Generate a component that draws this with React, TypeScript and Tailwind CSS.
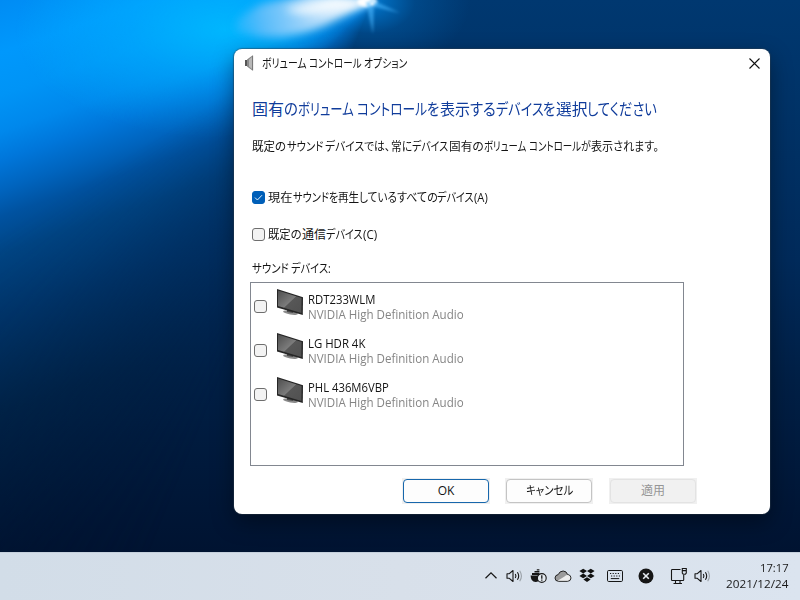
import { ReactNode, useLayoutEffect, useRef, useState } from 'react'
import clsx from 'clsx'

const devices = [
  { name: 'RDT233WLM', width: 67, driver: 'NVIDIA High Definition Audio' },
  { name: 'LG HDR 4K', width: 57, driver: 'NVIDIA High Definition Audio' },
  { name: 'PHL 436M6VBP', width: 81, driver: 'NVIDIA High Definition Audio' },
]

// Condenses a run of text to the given advance width, like the narrow kana of a UI font
function Fit({ width, children }: { width: number; children: ReactNode }) {
  const ref = useRef<HTMLSpanElement>(null)
  const [scale, setScale] = useState(1)

  useLayoutEffect(() => {
    if (ref.current) setScale(width / ref.current.offsetWidth)
  }, [width])

  return (
    <span className="inline-block align-top" style={{ width }}>
      <span className="inline-block origin-left whitespace-nowrap" ref={ref} style={{ transform: `scaleX(${scale})` }}>
        {children}
      </span>
    </span>
  )
}

function Line({ runs, className }: { runs: [string, number][]; className?: string }) {
  return (
    <span className={clsx('flex', className)}>
      {runs.map(([text, width], i) =>
        text ? <Fit key={i} width={width}>{text}</Fit> : <span key={i} className="whitespace-pre" style={{ width }}> </span>
      )}
    </span>
  )
}

function Wallpaper() {
  return (
    <div className="absolute inset-x-0 top-0 h-[552px] overflow-hidden">
      <div className="absolute inset-0 bg-[linear-gradient(180deg,#003870_0px,#003266_120px,#002a5a_260px,#001f45_380px,#001331_552px)]" />
      <div className="absolute inset-0 bg-[linear-gradient(161deg,#008cf4_0px,#0098fc_50px,#0094f6_90px,#0088ec_125px,#0076da_152px,#0064be_180px,#0052a0_205px,#004584_240px,#00366c_300px,#002549_390px,#001431_530px)] [mask-image:conic-gradient(from_0deg_at_372px_2px,transparent_202deg,#000c_228deg,#000_238deg,#000_290deg,transparent_300deg)]" />
      <div className="absolute inset-0 bg-[radial-gradient(ellipse_210px_110px_at_225px_30px,#00bcffdd,#00b0ff88_45%,transparent)] [mask-image:conic-gradient(from_0deg_at_372px_2px,transparent_222deg,#000_248deg,#000_300deg,transparent_310deg)]" />
      <div className="absolute inset-0 bg-[radial-gradient(ellipse_100px_70px_at_370px_2px,#0088e8cc,#0068b855_45%,transparent)]" />
      <svg className="absolute inset-0" width="800" height="552">
        <defs>
          <filter id="soft" x="-50%" y="-50%" width="200%" height="200%">
            <feGaussianBlur stdDeviation="4.5" />
          </filter>
          <filter id="core" x="-50%" y="-80%" width="200%" height="260%">
            <feGaussianBlur stdDeviation="4" />
          </filter>
          <filter id="glint" x="-80%" y="-80%" width="260%" height="260%">
            <feGaussianBlur stdDeviation="1.7" />
          </filter>
          <linearGradient id="beam" gradientUnits="userSpaceOnUse" x1="372" y1="2" x2="235" y2="30">
            <stop offset="0" stopColor="#fff" />
            <stop offset="0.45" stopColor="#b4dcfb" stopOpacity="0.95" />
            <stop offset="0.8" stopColor="#66befa" stopOpacity="0.85" />
            <stop offset="1" stopColor="#35b8ff" stopOpacity="0.5" />
          </linearGradient>
        </defs>
        <path d="M376 0 L310 -6 L262 4 Q226 22 238 32 Q278 45 324 26 Z" fill="url(#beam)" filter="url(#soft)" />
        <path d="M374 1 L335 -4 L285 9 Q298 17 328 13 Z" fill="#fff" opacity="0.75" filter="url(#core)" />
        <ellipse cx="367" cy="2" rx="10" ry="5" fill="#fff" filter="url(#glint)" />
        <path d="M366 2 L373 34 L374 2 Z M370 -1 L400 13 L371 6 Z" fill="#4cb8ff" opacity="0.6" filter="url(#glint)" />
      </svg>
    </div>
  )
}

function Checkbox({ checked }: { checked?: boolean }) {
  return (
    <span
      className={clsx(
        'grid size-[13px] shrink-0 place-items-center rounded-[3px] border',
        checked ? 'border-[#005fb8] bg-[#005fb8]' : 'border-[#6e6e6e] bg-[#f3f3f3]'
      )}
    >
      {checked && (
        <svg width="9" height="9" viewBox="0 0 9 9" fill="none" stroke="#fff" strokeWidth="0.9">
          <path d="M1 4.6 L3.4 7 L8 2.2" />
        </svg>
      )}
    </span>
  )
}

function MonitorIcon() {
  return (
    <svg className="shrink-0" width="28" height="28" viewBox="0 0 28 28">
      <defs>
        <linearGradient id="screen" x1="0" y1="0" x2="1" y2="1">
          <stop offset="0" stopColor="#4e4e4e" />
          <stop offset="0.5" stopColor="#7c7c7c" />
          <stop offset="0.52" stopColor="#575757" />
          <stop offset="1" stopColor="#505050" />
        </linearGradient>
      </defs>
      <ellipse cx="14.5" cy="24.7" rx="7.5" ry="1.9" transform="rotate(10 14.5 24.7)" fill="#8a8a8a" />
      <path d="M11 20 L18 22 L17 25 L11 24 Z" fill="#4a4a4a" />
      <path d="M1 1 L27 9.2 L26.8 27 L1 19.4 Z" fill="#252525" />
      <path d="M2 2.6 L25.6 10 L25.4 25 L2 18 Z" fill="url(#screen)" />
    </svg>
  )
}

function Button({ children, kind }: { children: ReactNode; kind?: 'default' | 'disabled' }) {
  return (
    <div className="bg-[#f0f0f0] p-px">
      <div
        className={clsx(
          'flex h-6 w-[86px] items-center justify-center rounded-[4px] border pb-px text-[12px]',
          kind === 'default' && 'border-[#1767ac] bg-[#fdfdfd]',
          kind === 'disabled' && 'border-[#e3e3e3] bg-[#f1f1f1] text-[#969696]',
          !kind && 'border-[#c4c4c4] bg-[#fdfdfd]'
        )}
      >
        {children}
      </div>
    </div>
  )
}

function DeviceList() {
  return (
    <div className="h-[184px] w-[434px] border border-[#828790] pt-[4px]">
      {devices.map(device => (
        <div key={device.name} className="flex h-11 pl-[3px]">
          <span className="mt-[13px]">
            <Checkbox />
          </span>
          <span className="ml-[9px] mt-px">
            <MonitorIcon />
          </span>
          <div className="ml-[4px] mt-[5px] text-[12px] leading-[15px]">
            <Line runs={[[device.name, device.width]]} />
            <Line className="text-[#858585]" runs={[[device.driver, 156]]} />
          </div>
        </div>
      ))}
    </div>
  )
}

function Dialog() {
  return (
    <div className="absolute left-[234px] top-[49px] flex h-[465px] w-[536px] flex-col rounded-[8px] bg-white text-[12px] whitespace-nowrap text-[#141414] shadow-[0_8px_22px_rgba(0,0,0,0.4),0_0_1px_1px_rgba(50,70,90,0.5)]">
      <div className="flex h-7 items-center pl-[10px] pr-[10px]">
        <svg width="12" height="16" viewBox="0 0 12 16">
          <path d="M1 5 L4 5 L4 11 L1 11 Z" fill="#555" />
          <path d="M3 4.6 L8.4 0.6 L8.4 15.4 L3 11.4 Z" fill="#8b8b8b" />
          <path d="M5 4.4 L8 2 L8 14 L5 11.6 Z" fill="#b8b8b8" />
          <path d="M8.6 0.6 V15.4" stroke="#707070" />
        </svg>
        <Line
          className="ml-[6px] pt-[2px] leading-4"
          runs={[['ボリューム', 44.5], ['', 2.5], ['コントロール', 52.5], ['', 2], ['オプション', 43.5]]}
        />
        <svg className="ml-auto" width="11" height="11" viewBox="0 0 11 11" stroke="#111" strokeWidth="1.1">
          <path d="M0.5 0.5 L10.5 10.5 M10.5 0.5 L0.5 10.5" />
        </svg>
      </div>
      <h1 className="mt-[20px] pl-[18px] text-[16px] leading-6 text-[#103c9b]">
        <Line
          runs={[
            ['固有', 32], ['の', 13.5], ['ボリューム', 55.5], ['', 4], ['コントロール', 70], ['を', 12.5], ['表示', 30], ['する', 26],
            ['デバイス', 47.5], ['を', 12.5], ['選択', 31.5], ['してください', 70],
          ]}
        />
      </h1>
      <p className="mt-[18px] pl-[18px] leading-4">
        <Line
          runs={[
            ['既定の', 34.5], ['サウンド', 36], ['', 2.5], ['デバイスでは、', 65.5], ['常に', 21.5], ['デバイス', 36.5], ['固有の', 35],
            ['ボリューム', 42], ['', 3], ['コントロール', 52], ['が', 10], ['表示されます。', 67.5],
          ]}
        />
      </p>
      <div className="mt-[34px] flex h-4 items-center gap-[3px] pl-[18px]">
        <Checkbox checked />
        <Line
          className="pt-[2px] leading-4"
          runs={[['現在', 24.5], ['サウンドを', 45], ['再生している', 59], ['すべての', 40.5], ['デバイス', 37], ['(A)', 14]]}
        />
      </div>
      <div className="mt-[21px] flex h-4 items-center gap-[3px] pl-[18px]">
        <Checkbox />
        <Line className="pt-[2px] leading-4" runs={[['既定の', 34], ['通信', 24], ['デバイス', 37], ['(C)', 14.5]]} />
      </div>
      <div className="mt-[19px] h-[15px] pl-[18px] leading-4">
        <Line runs={[['サウンド', 36.5], ['', 2.5], ['デバイス:', 40]]} />
      </div>
      <div className="mt-[6px] pl-[16px]">
        <DeviceList />
      </div>
      <div className="mt-[12px] flex gap-[15px] pl-[168px]">
        <Button kind="default">OK</Button>
        <Button>
          <Fit width={47}>キャンセル</Fit>
        </Button>
        <div className="pl-px">
          <Button kind="disabled">適用</Button>
        </div>
      </div>
    </div>
  )
}

function SpeakerIcon() {
  return (
    <svg width="17" height="16" viewBox="0 0 17 16" fill="none" stroke="#161616" strokeWidth="1.1">
      <path d="M1 5.7 H3.3 L7 2.5 V13.5 L3.3 10.3 H1 Z" strokeLinejoin="round" />
      <path d="M9.3 6 Q10.6 8 9.3 10" />
      <path d="M11.4 4.2 Q14 8 11.4 11.8" />
      <path d="M13.7 2.8 Q17.2 8 13.7 13.2" stroke="#9ba2a9" />
    </svg>
  )
}

function DockerIcon() {
  return (
    <svg width="17" height="16" viewBox="0 0 17 16">
      <path d="M0.6 7.5 H11 L13 5 L12 9 Q9 14 5.5 14 Q0.8 14 0.6 7.5 Z" fill="#161616" />
      <path d="M2 5 H9.4 V7 H2 Z M4.5 3 H9.4 V4.6 H4.5 Z M6.8 1.2 H9.4 V2.6 H6.8 Z" fill="#161616" />
      <circle cx="11.8" cy="10" r="4.4" fill="#e4eaf0" stroke="#161616" strokeWidth="1.1" />
      <path d="M11.8 7.3 V10.8 M11.8 11.6 V12.8" stroke="#161616" strokeWidth="1.3" />
    </svg>
  )
}

function CloudIcon() {
  return (
    <svg width="18" height="14" viewBox="0 0 18 14">
      <path
        d="M4.5 12.3 Q1 12.2 1 9 Q1.2 6 4.2 5.6 Q5.6 2 9.2 2 Q12.6 2.2 13.5 5.4 Q17 6 17 9 Q16.8 12.2 13.5 12.3 Z"
        fill="#9b9b9b"
        stroke="#222"
        strokeWidth="1"
      />
      <path d="M3.6 11.8 L10.5 7.4 Q12 6 14 6 Q16.4 6.6 16.4 9 Q16.2 11.6 13.5 11.8 Z" fill="#eeeeee" />
    </svg>
  )
}

function DropboxIcon() {
  return (
    <svg width="16" height="15" viewBox="0 0 16 15" fill="#111">
      <path d="M4.2 0.8 L8 3.1 L4.2 5.4 L0.4 3.1 Z M11.8 0.8 L15.6 3.1 L11.8 5.4 L8 3.1 Z" />
      <path d="M4.2 5.6 L8 7.9 L4.2 10.2 L0.4 7.9 Z M11.8 5.6 L15.6 7.9 L11.8 10.2 L8 7.9 Z" />
      <path d="M8 9.3 L11.6 11.5 L8 13.9 L4.4 11.5 Z" />
    </svg>
  )
}

function KeyboardIcon() {
  return (
    <svg width="16" height="12" viewBox="0 0 16 12" fill="none" stroke="#161616">
      <rect x="0.5" y="0.5" width="15" height="11" rx="1.2" />
      <path d="M3 3.5 H13.5" strokeDasharray="1.2 1.4" />
      <path d="M4 6 H13" strokeDasharray="1.2 1.4" />
      <path d="M3.8 8.6 H12.2" />
    </svg>
  )
}

function NetworkIcon() {
  return (
    <svg width="18" height="18" viewBox="0 0 18 18" fill="none" stroke="#161616" strokeWidth="1.1">
      <path d="M10.5 2.5 H2.3 Q1.5 2.5 1.5 3.3 V12.7 Q1.5 13.5 2.3 13.5 H13 Q13.7 13.5 13.7 12.7 V8" />
      <path d="M5.5 13.5 V16.5 M10 13.5 V16.5 M3.5 16.5 H12" />
      <path d="M12.3 1.5 H16.3 V6 L15.4 7.2 H13.2 L12.3 6 Z M12.3 3.6 H16.3" />
    </svg>
  )
}

function Taskbar() {
  return (
    <div className="absolute inset-x-0 bottom-0 flex h-12 items-center justify-end border-t border-[#c5d0dc] bg-[linear-gradient(90deg,#d2dde8,#d8e0ea_50%,#dbe4ef)] pb-[2px] pr-3 text-[#1a1a1a]">
      <svg width="12" height="7" viewBox="0 0 12 7" fill="none" stroke="#161616" strokeWidth="1.2">
        <path d="M0.5 6.3 L6 0.9 L11.5 6.3" />
      </svg>
      <span className="ml-[9px]"><SpeakerIcon /></span>
      <span className="ml-[7px]"><DockerIcon /></span>
      <span className="ml-[7px]"><CloudIcon /></span>
      <span className="ml-[7px]"><DropboxIcon /></span>
      <span className="ml-[12px]"><KeyboardIcon /></span>
      <svg className="ml-[15px]" width="16" height="16" viewBox="0 0 16 16">
        <circle cx="8" cy="8" r="7.5" fill="#161616" />
        <path d="M5.2 5.2 L10.8 10.8 M10.8 5.2 L5.2 10.8" stroke="#e8edf2" strokeWidth="1.6" />
      </svg>
      <span className="ml-[16px]"><NetworkIcon /></span>
      <span className="ml-[6px]"><SpeakerIcon /></span>
      <div className="ml-[7px] flex w-[70px] flex-col items-end text-[11px] leading-4">
        <Line runs={[['17:17', 28.5]]} />
        <Line runs={[['2021/12/24', 62]]} />
      </div>
    </div>
  )
}

export default function App() {
  return (
    <div className="relative h-[600px] w-[800px] overflow-hidden font-['Open_Sans','Noto_Sans_CJK_JP',sans-serif] [font-feature-settings:'palt'] [&_svg]:block">
      <Wallpaper />
      <Dialog />
      <Taskbar />
    </div>
  )
}
